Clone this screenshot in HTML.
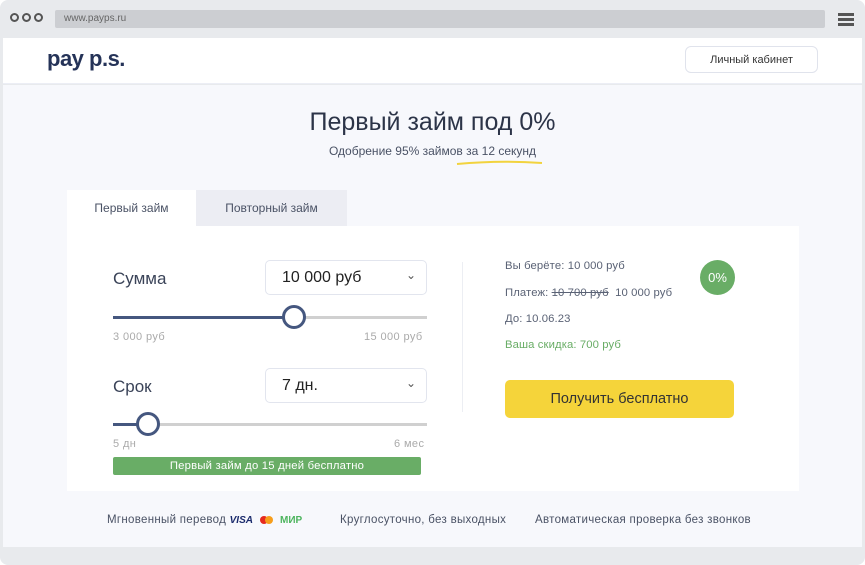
<!DOCTYPE html>
<html><head><meta charset="utf-8"><style>
*{margin:0;padding:0;box-sizing:border-box}
body{width:865px;height:565px;background:#fff;font-family:"Liberation Sans",sans-serif;position:relative;overflow:hidden;color:#2c3448}
.frame{position:absolute;left:0;top:0;width:865px;height:565px;background:#e8eaed;border-radius:8px}
.a{position:absolute}
.dot{position:absolute;top:13px;width:9px;height:9px;border:2px solid #555;border-radius:50%}
.url{left:55px;top:10px;width:770px;height:18px;background:#ccced2;border-radius:2px;font-size:10px;color:#666;padding:3px 0 0 9px}
.hdr{left:3px;top:38px;width:859px;height:46px;background:#fff;border-bottom:1px solid #eceef5}
.main{left:3px;top:85px;width:859px;height:462px;background:#f7f8fc}
.t{font-size:11.5px;color:#4a5265;letter-spacing:0.3px}
.r{font-size:11.3px;color:#5a6275;letter-spacing:0.1px}
</style></head><body>
<div class="frame"></div>
<div class="dot" style="left:10px"></div><div class="dot" style="left:22px"></div><div class="dot" style="left:34px"></div>
<div class="a url">www.payps.ru</div>
<div class="a" style="left:838px;top:13px;width:16px;height:3px;background:#555"></div>
<div class="a" style="left:838px;top:18px;width:16px;height:3px;background:#555"></div>
<div class="a" style="left:838px;top:23px;width:16px;height:3px;background:#555"></div>
<div class="a hdr"></div>
<div class="a" style="left:47px;top:46px;font-size:22px;font-weight:bold;color:#253358;letter-spacing:-0.5px">pay p.s.</div>
<div class="a" style="left:685px;top:46px;width:133px;height:27px;border:1px solid #e0e3ec;border-radius:6px;background:#fff;font-size:11px;text-align:center;line-height:27px;color:#333">Личный кабинет</div>
<div class="a main"></div>
<div class="a" style="left:0;width:865px;top:108px;text-align:center;font-size:25px;color:#2c3448">Первый займ под 0%</div>
<div class="a" style="left:0;width:865px;top:144px;text-align:center;font-size:12px;color:#4a5265">Одобрение 95% займов за 12 секунд</div>
<svg class="a" style="left:455px;top:159px" width="90" height="8"><path d="M2 5 Q45 1 87 4" stroke="#f2d33e" stroke-width="2" fill="none"/></svg>
<div class="a" style="left:67px;top:190px;width:129px;height:36px;background:#fff;font-size:12px;text-align:center;line-height:36px;color:#4a5265">Первый займ</div>
<div class="a" style="left:196px;top:190px;width:151px;height:36px;background:#ecedf3;font-size:12px;text-align:center;line-height:36px;color:#4a5265">Повторный займ</div>
<div class="a" style="left:67px;top:226px;width:732px;height:265px;background:#fff"></div>
<div class="a" style="left:113px;top:269px;font-size:17px;color:#3a4358">Сумма</div>
<div class="a" style="left:265px;top:260px;width:162px;height:35px;border:1px solid #e2e5ee;border-radius:5px;font-size:16px;line-height:33px;padding-left:16px;color:#222">10 000 руб<span style="position:absolute;right:10px;top:-2px;font-size:12px;color:#555">⌄</span></div>
<div class="a" style="left:113px;top:316px;width:181px;height:3px;background:#45577f"></div>
<div class="a" style="left:294px;top:316px;width:133px;height:3px;background:#d0d0d0"></div>
<div class="a" style="left:282px;top:305px;width:24px;height:24px;border:3px solid #45577f;border-radius:50%;background:#fff"></div>
<div class="a" style="left:113px;top:331px;font-size:11px;color:#aaa;letter-spacing:0.4px">3 000 руб</div>
<div class="a" style="left:364px;top:331px;font-size:11px;color:#aaa;letter-spacing:0.4px">15 000 руб</div>
<div class="a" style="left:113px;top:377px;font-size:17px;color:#3a4358">Срок</div>
<div class="a" style="left:265px;top:368px;width:162px;height:35px;border:1px solid #e2e5ee;border-radius:5px;font-size:16px;line-height:33px;padding-left:16px;color:#222">7 дн.<span style="position:absolute;right:10px;top:-2px;font-size:12px;color:#555">⌄</span></div>
<div class="a" style="left:113px;top:423px;width:35px;height:3px;background:#45577f"></div>
<div class="a" style="left:148px;top:423px;width:279px;height:3px;background:#d0d0d0"></div>
<div class="a" style="left:136px;top:412px;width:24px;height:24px;border:3px solid #45577f;border-radius:50%;background:#fff"></div>
<div class="a" style="left:113px;top:438px;font-size:11px;color:#aaa;letter-spacing:0.4px">5 дн</div>
<div class="a" style="left:394px;top:438px;font-size:11px;color:#aaa;letter-spacing:0.4px">6 мес</div>
<div class="a" style="left:113px;top:457px;width:308px;height:18px;background:#69ad66;border-radius:2px;font-size:11.3px;color:#fff;text-align:center;line-height:18px;letter-spacing:0.2px">Первый займ до 15 дней бесплатно</div>
<div class="a" style="left:462px;top:262px;width:1px;height:150px;background:#eceef3"></div>
<div class="a r" style="left:505px;top:260px">Вы берёте: 10 000 руб</div>
<div class="a r" style="left:505px;top:287px">Платеж: <s>10 700 руб</s>&nbsp; 10 000 руб</div>
<div class="a r" style="left:505px;top:313px">До: 10.06.23</div>
<div class="a r" style="left:505px;top:339px;color:#69ad66">Ваша скидка: 700 руб</div>
<div class="a" style="left:700px;top:260px;width:35px;height:35px;border-radius:50%;background:#69ad66;color:#fff;font-size:13px;text-align:center;line-height:35px">0%</div>
<div class="a" style="left:505px;top:380px;width:229px;height:38px;border-radius:5px;background:#f5d43a;font-size:14.5px;text-align:center;line-height:38px;color:#333">Получить бесплатно</div>
<div class="a t" style="left:107px;top:514px">Мгновенный перевод <b style="color:#1a2a6c;font-style:italic;font-size:10px;letter-spacing:0">VISA</b> &nbsp;<span style="display:inline-block;width:8px;height:8px;border-radius:50%;background:#e62a1f;vertical-align:-1px"></span><span style="display:inline-block;width:8px;height:8px;border-radius:50%;background:#f79e1b;margin-left:-3px;vertical-align:-1px"></span> &nbsp;<b style="color:#4db45e;font-size:10px;letter-spacing:0">МИР</b></div>
<div class="a t" style="left:340px;top:514px">Круглосуточно, без выходных</div>
<div class="a t" style="left:535px;top:514px">Автоматическая проверка без звонков</div>
</body></html>
